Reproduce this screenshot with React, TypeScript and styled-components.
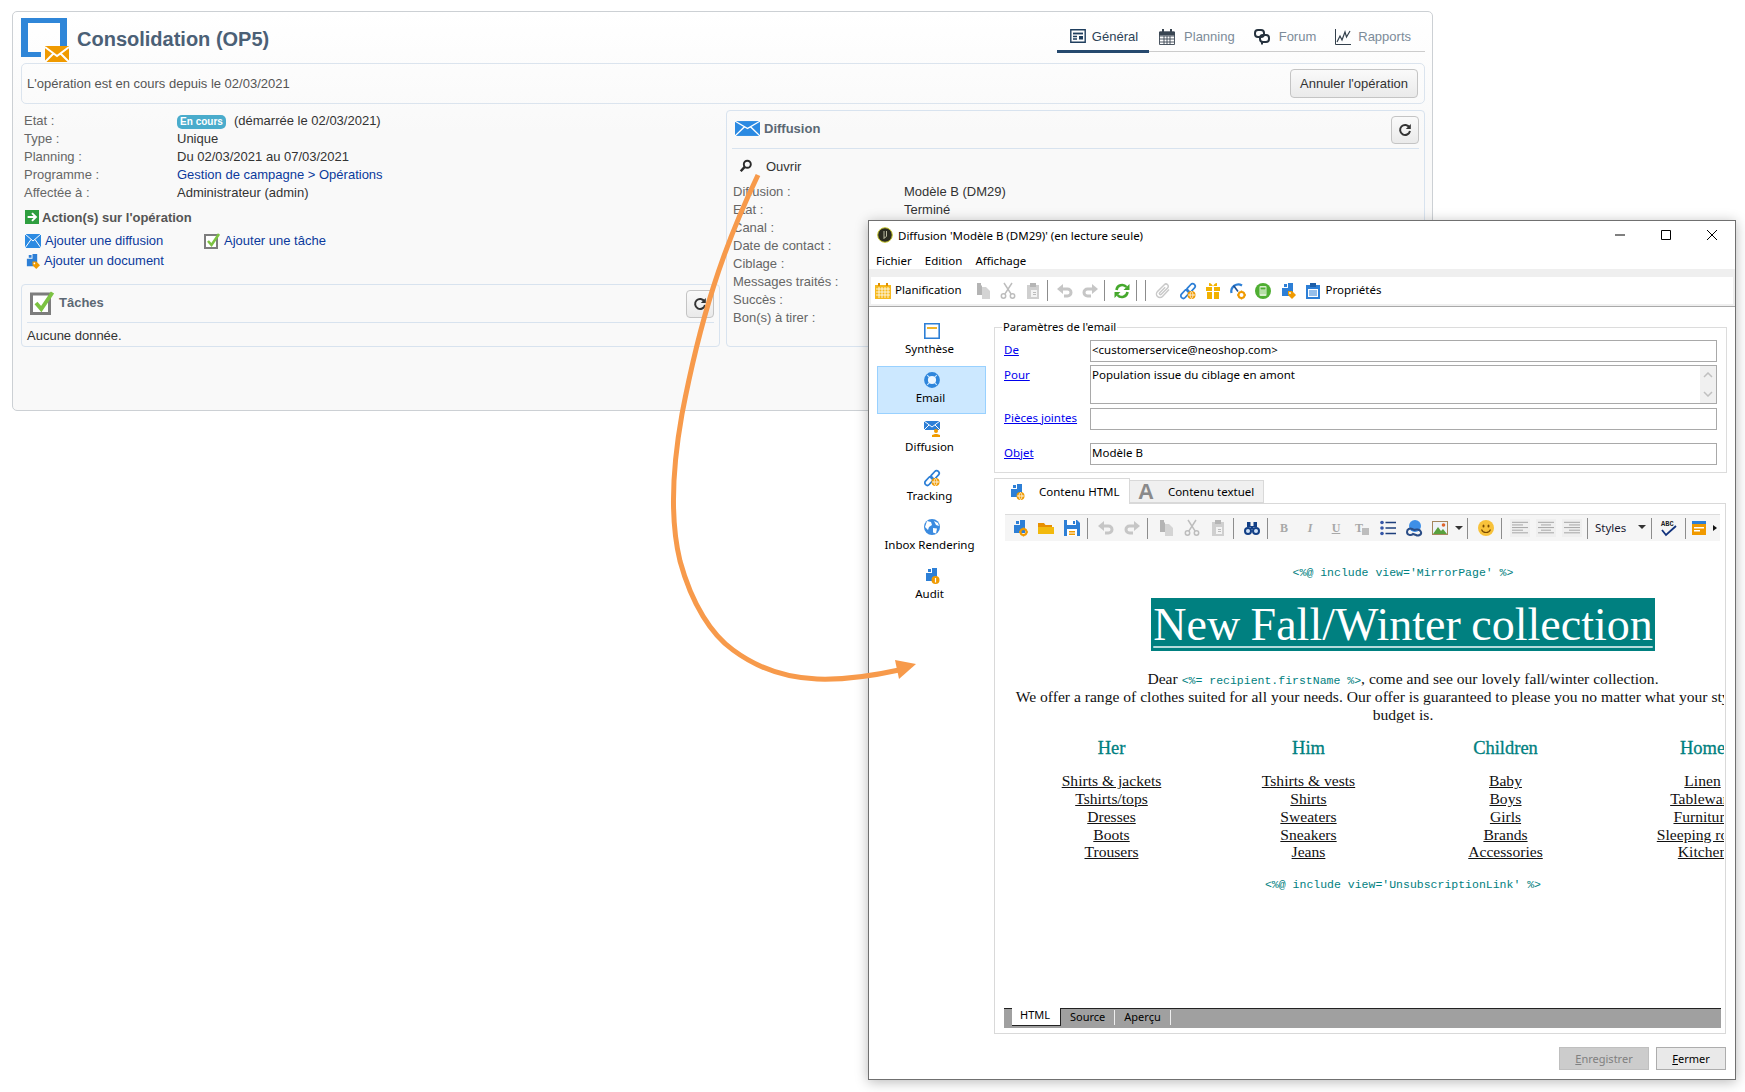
import React from "react";
import styled, { createGlobalStyle } from "styled-components";

const GlobalStyle = createGlobalStyle`
  html, body { margin: 0; padding: 0; background: #fff; }
  body { font-family: "Liberation Sans", Arial, sans-serif; font-size: 13px; color: #333; }
  #root { position: relative; width: 1745px; height: 1092px; overflow: hidden; }
`;

const BLUE = "#2d7fd6";
const ORANGE = "#f09a00";
const GREY = "#c6c6c6";
const UI_FONT = `"Noto Sans", "Liberation Sans", sans-serif`;
const SERIF = `"Liberation Serif", "Times New Roman", serif`;
const MONO = `"Liberation Mono", "Courier New", monospace`;

/* ---------- icons ---------- */
const Doc = ({ c = BLUE }: { c?: string }) => <path d="M4 1h3v3H4zM8 0h5v13H2V5h6z" fill={c} />;
const OrangeGlobe = () => (
  <g>
    <circle cx="11.5" cy="12" r="4" fill={ORANGE} />
    <path d="M8 12h7M11.5 8.5c-2 2-2 5 0 7M11.5 8.5c2 2 2 5 0 7" stroke="#fff" strokeWidth=".8" fill="none" />
  </g>
);
const Gear = () => (
  <g>
    <circle cx="11.5" cy="12" r="3" fill="none" stroke={ORANGE} strokeWidth="2" />
    <path d="M11.5 7.5v2M11.5 14.5v2M7 12h2M14 12h2" stroke={ORANGE} strokeWidth="1.4" />
  </g>
);
const Chain = ({ c = BLUE }: { c?: string }) => (
  <g fill="none" stroke={c} strokeWidth="1.7">
    <rect x="8.5" y="0" width="5" height="10" rx="2.5" transform="rotate(42 11 5)" />
    <rect x="2.5" y="6" width="5" height="10" rx="2.5" transform="rotate(42 5 11)" />
  </g>
);
const Undo = ({ c = GREY }: { c?: string }) => (
  <g>
    <path d="M5 6h5.5a3.5 3.5 0 0 1 0 7H7" fill="none" stroke={c} strokeWidth="3" />
    <path d="M6 1v10L0 6z" fill={c} />
  </g>
);

const ICONS: Record<string, React.ReactNode> = {
  calendar: (
    <g>
      <path d="M0 2h16v14H0z" fill="#f6b91d" />
      <path d="M3 0h2v3H3zM11 0h2v3h-2z" fill="#e08e00" />
      <path d="M1 6h14M1 9h14M1 12h14M4 4v11M7 4v11M10 4v11M13 4v11" stroke="#fff" strokeWidth=".8" />
    </g>
  ),
  copy: (
    <g>
      <path d="M2 0h4v2l1 1v9H2z" fill="#b4b4b4" />
      <path d="M7 4h4l4 4v8H7z" fill="#d4d4d4" />
    </g>
  ),
  cut: (
    <g fill="none" stroke="#bdbdbd" strokeWidth="1.5">
      <circle cx="3.5" cy="13" r="2.2" />
      <circle cx="12.5" cy="13" r="2.2" />
      <path d="M4.8 11.2 12 0M11.2 11.2 4 0" />
    </g>
  ),
  paste: (
    <g>
      <path d="M2 2h12v14H2z" fill="#cfcfcf" />
      <path d="M5 0h6v4H5z" fill="#b5b5b5" />
      <path d="M6 7h6v7H6z" fill="#f3f3f3" />
      <path d="M8 9h3v1H8zM8 11h3v1H8z" fill="#bbb" />
    </g>
  ),
  undo: <Undo />,
  redo: <g transform="translate(16 0) scale(-1 1)"><Undo /></g>,
  refresh: (
    <g>
      <path d="M2.500 7a5.700 5.700 0 0 1 10-3" fill="none" stroke="#45a82c" strokeWidth="2.600" />
      <path d="M15.500 1v6h-6z" fill="#45a82c" />
      <path d="M13.500 9a5.700 5.700 0 0 1-10 3" fill="none" stroke="#45a82c" strokeWidth="2.600" />
      <path d="M.5 15V9h6z" fill="#45a82c" />
    </g>
  ),
  clip: (
    <path
      d="M14 6.500 7.500 13.500a3.500 3.500 0 0 1-5-5l6.800-6.800a2.300 2.300 0 0 1 3.300 3.300l-6.300 6.300a1.100 1.100 0 0 1-1.600-1.600l5.500-5.500"
      fill="none"
      stroke="#c9c9c9"
      strokeWidth="1.500"
    />
  ),
  link: <g><Chain /><OrangeGlobe /></g>,
  gift: (
    <g fill="#f2b200">
      <path d="M1 4h14v4H1zM2 9h12v7H2z" />
      <path d="M4 0c2 0 3 1.500 4 3.500C9 1.500 10 0 12 0v3H4z" />
      <path d="M7 4h2v12H7z" fill="#fff" />
    </g>
  ),
  gauge: (
    <g>
      <path d="M1.500 10A7 7 0 0 1 12 2.500" fill="none" stroke={BLUE} strokeWidth="2.200" />
      <path d="M3.500 2.500l4.500 6" stroke="#1f4f8f" strokeWidth="1.500" />
      <Gear />
    </g>
  ),
  calc: (
    <g>
      <circle cx="8" cy="8" r="8" fill="#4fae32" />
      <rect x="4.500" y="3" width="7" height="10" rx="1" fill="#d9efcf" />
      <path d="M5.500 4.500h5v2h-5z" fill="#4fae32" />
      <path d="M5.500 8h5M5.500 10h5" stroke="#4fae32" strokeDasharray="1 1" />
    </g>
  ),
  docTag: (
    <g>
      <Doc />
      <path d="M8 8h4l4 4-4 4-4-4z" fill={ORANGE} />
      <circle cx="10" cy="10" r=".9" fill="#fff" />
    </g>
  ),
  clipboard: (
    <g>
      <path d="M1 2h14v14H1z" fill={BLUE} />
      <path d="M5 0h6v4H5z" fill="#1f5fa8" />
      <path d="M3 6h10v8H3z" fill="#fff" />
      <path d="M4 8h8M4 10h8M4 12h8" stroke={BLUE} strokeWidth="1" />
    </g>
  ),
  docGlobe: <g><Doc /><OrangeGlobe /></g>,
  docGear: <g><Doc /><Gear /></g>,
  docInfo: (
    <g>
      <Doc />
      <circle cx="11.500" cy="12" r="4" fill={ORANGE} />
      <path d="M11.500 10v4.500" stroke="#fff" strokeWidth="1.200" />
    </g>
  ),
  folder: (
    <g>
      <path d="M0 3h6l1.500 2H14v2H0z" fill="#e88f00" />
      <path d="M0 7h16v7H0z" fill="#f2b90d" />
    </g>
  ),
  save: (
    <g>
      <path d="M0 0h13l3 3v13H0z" fill={BLUE} />
      <path d="M3 0h9v5H3z" fill="#fff" />
      <path d="M9 1h2v3H9z" fill={BLUE} />
      <path d="M3 9h10v7H3z" fill="#fff" />
      <path d="M5 11h6v1.500H5zM5 13.500h6V15H5z" fill={ORANGE} />
    </g>
  ),
  binoculars: (
    <g fill="#123f86">
      <path d="M3 2h3.500v5H3zM9.500 2H13v5H9.500zM6.500 6h3v3h-3z" />
      <circle cx="4" cy="11" r="4" />
      <circle cx="12" cy="11" r="4" />
      <circle cx="4" cy="11" r="2" fill="#cfe2f7" />
      <circle cx="12" cy="11" r="2" fill="#cfe2f7" />
    </g>
  ),
  list: (
    <g>
      <path d="M5.500 2.500H16M5.500 8H16M5.500 13.500H16" stroke="#1d3f7c" strokeWidth="1.500" />
      <circle cx="2" cy="2.500" r="1.800" fill="#3556a8" />
      <circle cx="2" cy="8" r="1.800" fill="#3556a8" />
      <circle cx="2" cy="13.500" r="1.800" fill="#3556a8" />
    </g>
  ),
  webLink: (
    <g>
      <circle cx="9" cy="6" r="6" fill="#3e8fe8" />
      <path d="M1 12c0-3 3-4 5-3l2 1c2-1 6-1 7 2s-3 4-5 3l-3-1c-2 2-6 1-6-2z" fill="none" stroke="#2b4d86" strokeWidth="2" />
    </g>
  ),
  image: (
    <g>
      <path d="M0 1h16v14H0z" fill="#a5865c" />
      <path d="M1 2h14v12H1z" fill="#eef3f7" />
      <circle cx="11.500" cy="5" r="1.800" fill="#e0642a" />
      <path d="M1 14l5-7 3 4 2-2 4 5z" fill="#59a13c" />
    </g>
  ),
  smile: (
    <g>
      <circle cx="8" cy="8" r="8" fill="#f8c23a" />
      <ellipse cx="5.500" cy="6" rx="1" ry="1.600" fill="#7a4a00" />
      <ellipse cx="10.500" cy="6" rx="1" ry="1.600" fill="#7a4a00" />
      <path d="M3.500 9.500c1.500 4 7.500 4 9 0" fill="none" stroke="#7a4a00" strokeWidth="1.100" />
    </g>
  ),
  alignLeft: <path d="M0 1.500h16M0 4.500h11M0 7.500h16M0 10.500h11M0 13.500h16" stroke="#a2a2a2" />,
  alignCenter: <path d="M0 1.500h16M3 4.500h10M0 7.500h16M3 10.500h10M0 13.500h16" stroke="#a2a2a2" />,
  alignRight: <path d="M0 1.500h16M5 4.500h11M0 7.500h16M5 10.500h11M0 13.500h16" stroke="#a2a2a2" />,
  spell: (
    <g>
      <text x="0" y="6" fontFamily="Liberation Mono, monospace" fontSize="7" fontWeight="700" fill="#222">ABC</text>
      <path d="M1 10l4 5L15 6" fill="none" stroke="#11327d" strokeWidth="1.800" />
    </g>
  ),
  orangeWin: (
    <g>
      <path d="M1 1h14v14H1z" fill={ORANGE} />
      <path d="M1 1h14v3H1z" fill={BLUE} />
      <path d="M3 7h10v1.500H3zM3 10h6v1.500H3z" fill="#fff" />
    </g>
  ),
  summary: (
    <g>
      <path d="M.8.800h14.400v14.400H.8z" fill="#fff" stroke={BLUE} strokeWidth="1.600" />
      <path d="M3 4h10v2H3z" fill="#f0b429" />
    </g>
  ),
  lifebuoy: (
    <g>
      <circle cx="8" cy="8" r="4" fill="#eef7ff" />
      <circle cx="8" cy="8" r="6" fill="none" stroke="#2f86dc" strokeWidth="3.800" />
      <path d="M3.200 3.200l2 2M12.800 3.200l-2 2M3.200 12.800l2-2M12.800 12.800l-2-2" stroke="#cce8ff" strokeWidth="1.100" />
    </g>
  ),
  mailPerson: (
    <g>
      <path d="M0 0h16v9H0z" fill={BLUE} />
      <path d="M0 0l8 6 8-6M0 9l5-5M16 9l-5-5" stroke="#fff" fill="none" />
      <circle cx="12" cy="10" r="2" fill={ORANGE} />
      <path d="M8 16v-2l3-1h2l3 1v2z" fill={ORANGE} />
    </g>
  ),
  globe: (
    <g>
      <circle cx="8" cy="8" r="8" fill="#3b8be0" />
      <path d="M3 2l4 1 1 3-3 2-1 3-3-3zM9 9l4 .500-1 5-3-1zM10 2l4 2 1 3-3-1z" fill="#fff" />
    </g>
  ),
  search: (
    <g fill="none" stroke="#2b2b2b">
      <circle cx="9.500" cy="6" r="4" strokeWidth="2.200" />
      <path d="M6.500 9 2 14" strokeWidth="2.800" />
    </g>
  ),
  mail: (
    <g>
      <path d="M0 1h16v14H0z" fill="#2b8ae2" />
      <path d="M0 1l8 7 8-7M0 15l6-8.500M16 15l-6-8.500" stroke="#fff" strokeWidth="1" fill="none" />
    </g>
  ),
  arrowBox: (
    <g>
      <path d="M0 0h16v16H0z" fill="#2e9e3f" />
      <path d="M3 8h8M8 3.500 12.500 8 8 12.500" stroke="#fff" strokeWidth="2.200" fill="none" />
    </g>
  ),
  check: (
    <g>
      <path d="M1 2h12v13H1z" fill="#fff" stroke="#7d7d7d" strokeWidth="2" />
      <path d="M4 8l3.500 4L15 1" fill="none" stroke="#7cc242" strokeWidth="2.600" />
    </g>
  ),
  news: (
    <g fill="none" stroke="#1f3e5e" strokeWidth="1.400">
      <path d="M.8 1.800h14.400v12.400H.8z" />
      <path d="M3 5.500h10" strokeWidth="1.800" />
      <path d="M3 8.500h4M3 11h4" />
      <path d="M9 8h4v3.500H9z" fill="#1f3e5e" stroke="none" />
    </g>
  ),
  grid: (
    <g fill="none" stroke="#3a4652" strokeWidth=".9">
      <path d="M.5 3h15v12.500H.5zM.5 7h15M.5 10h15M.5 13h15M5 7v8.500M8 7v8.500M11 7v8.500" />
      <path d="M4 0v3M12 0v3" strokeWidth="2" />
      <path d="M.5 3h15v3h-15z" fill="#3a4652" />
    </g>
  ),
  forum: (
    <g fill="none" stroke="#26323e" strokeWidth="2">
      <rect x="1" y="1" width="9" height="7" rx="3" />
      <rect x="6" y="6" width="9" height="7" rx="3" />
      <path d="M8 13v2.500" />
    </g>
  ),
  chart: (
    <g fill="none" stroke="#33404c">
      <path d="M.5 0v15.500H16" />
      <path d="M2 13l3-6 2 4 3-8 1.500 5L15 2" strokeWidth="1.200" />
    </g>
  ),
};

const Icon = ({ name, size = 16, h }: { name: string; size?: number; h?: number }) => (
  <svg width={size} height={h ?? size} viewBox="0 0 16 16" preserveAspectRatio="none" overflow="visible" style={{ flex: "none" }}>
    {ICONS[name]}
  </svg>
);

const RefreshGlyph = () => (
  <svg width="14" height="14" viewBox="0 0 14 14">
    <path d="M11.500 4.500A5 5 0 1 0 12 8" fill="none" stroke="#333" strokeWidth="2" />
    <path d="M12.800 1v5h-5z" fill="#333" />
  </svg>
);

/* ---------- operation page ---------- */
const Page = styled.div`
  padding: 11px 0 0 12px;
`;
const Panel = styled.section`
  box-sizing: border-box;
  width: 1421px;
  height: 400px;
  padding: 0 7px 0 8px;
  background: linear-gradient(#fff, #f9f9f9 120px);
  border: 1px solid #ccd0d4;
  border-radius: 5px;
`;
const Header = styled.header`
  display: flex;
  align-items: flex-start;
  height: 51px;
`;
const Logo = styled.svg`
  width: 48px;
  height: 44px;
  margin-top: 6px;
  flex: none;
`;
const Title = styled.h1`
  margin: 13px 0 0 8px;
  font-size: 20px;
  line-height: 28px;
  font-weight: 700;
  color: #4b6076;
`;
const TabList = styled.nav`
  display: flex;
  margin-left: auto;
  height: 39px;
  padding-right: 14px;
  border-bottom: 1px solid #ccc;
`;
const Tab = styled.div<{ $active?: boolean; $tight?: boolean }>`
  display: flex;
  align-items: center;
  gap: ${(p) => (p.$active ? 6 : p.$tight ? 7 : 9)}px;
  box-sizing: border-box;
  padding: ${(p) => (p.$active ? "16px 11px 6px 13px" : "16px 9px 6px 10px")};
  margin-bottom: -1px;
  font-size: 13px;
  color: ${(p) => (p.$active ? "#2c4257" : "#7c8b99")};
  border-bottom: ${(p) => (p.$active ? "3px solid #26496e" : "none")};
  height: ${(p) => (p.$active ? "41px" : "39px")};
  &:last-child { padding-right: 0; }
`;
const StatusBar = styled.div`
  display: flex;
  align-items: center;
  justify-content: space-between;
  box-sizing: border-box;
  height: 41px;
  padding: 0 6px 0 5px;
  border: 1px solid #dbe4ee;
  border-radius: 5px;
  color: #555;
`;
const PlainButton = styled.button`
  height: 29px;
  padding: 0 9px;
  font: 13px "Liberation Sans", Arial, sans-serif;
  color: #333;
  background: linear-gradient(#fafafa, #eaeaea);
  border: 1px solid #c4c4c4;
  border-radius: 4px;
`;
const IconButton = styled(PlainButton)`
  display: flex;
  align-items: center;
  justify-content: center;
  width: 28px;
  height: 28px;
  padding: 0;
`;
const Columns = styled.div`
  display: flex;
  gap: 6px;
  margin-top: 6px;
  height: 237px;
`;
const LeftColumn = styled.div`
  display: flex;
  flex-direction: column;
  flex: 699px 0 0;
  padding-top: 2px;
`;
const InfoRow = styled.div`
  display: flex;
  height: 18px;
  line-height: 18px;
  padding-left: 3px;
`;
const InfoLabel = styled.span<{ $wide?: boolean }>`
  flex: none;
  width: ${(p) => (p.$wide ? "171px" : "153px")};
  color: #666;
`;
const InfoValue = styled.span`
  display: flex;
  align-items: center;
  gap: 8px;
  color: #333;
`;
const Badge = styled.span`
  width: 49px;
  height: 14px;
  line-height: 14px;
  margin-top: 1px;
  text-align: center;
  font-size: 10px;
  font-weight: 700;
  color: #fff;
  background: #4aaccc;
  border-radius: 5px;
`;
const BlueLink = styled.a`
  color: #0b3a9c;
`;
const ActionTitle = styled.div`
  display: flex;
  align-items: center;
  gap: 3px;
  margin-top: 6px;
  padding-left: 4px;
  height: 18px;
  font-weight: 700;
  color: #555;
`;
const ActionGrid = styled.div`
  display: grid;
  grid-template-columns: 179px auto;
  justify-content: start;
  grid-auto-rows: 20px;
  margin-top: 5px;
  padding-left: 4px;
`;
const ActionLink = styled(BlueLink)`
  display: flex;
  align-items: center;
  gap: 4px;
  line-height: 20px;
`;
const Box = styled.div<{ $fill?: boolean }>`
  box-sizing: border-box;
  padding: 0 5px;
  border: 1px solid #d8e3ef;
  border-radius: 4px;
  ${(p) => (p.$fill ? "flex: 1;" : "margin-top: auto;height: 63px;")}
`;
const BoxHead = styled.div`
  display: flex;
  align-items: center;
  justify-content: space-between;
  height: 37px;
  border-bottom: 1px solid #d8e3ef;
`;
const BoxTitle = styled.div<{ $wide?: boolean }>`
  display: flex;
  align-items: center;
  gap: ${(p) => (p.$wide ? 5 : 4)}px;
  padding: 0 0 2px 3px;
  font-size: 13px;
  font-weight: 700;
  color: #5b6874;
`;
const EmptyText = styled.div`
  line-height: 26px;
  color: #333;
`;
const OpenRow = styled.div`
  box-sizing: border-box;
  display: flex;
  align-items: center;
  gap: 13px;
  height: 34px;
  padding: 0 0 0 7px;
  color: #333;
`;
const DetailRow = styled(InfoRow)`
  padding-left: 1px;
`;

/* ---------- delivery window ---------- */
const Window = styled.div`
  position: absolute;
  left: 868px;
  top: 220px;
  z-index: 2;
  box-sizing: border-box;
  display: flex;
  flex-direction: column;
  width: 868px;
  height: 860px;
  background: #fff;
  border: 1px solid #707070;
  box-shadow: 0 2px 12px rgba(0, 0, 0, 0.28);
  font-family: ${UI_FONT};
  font-size: 11.500px;
  color: #000;
`;
const TitleBar = styled.div`
  box-sizing: border-box;
  display: flex;
  align-items: center;
  height: 30px;
  padding: 0 0 2px 8px;
  gap: 5px;
`;
const WinControls = styled.div`
  display: flex;
  margin-left: auto;
`;
const WinControl = styled.div`
  display: flex;
  align-items: center;
  justify-content: center;
  width: 46px;
  height: 28px;
`;
const MenuBar = styled.div`
  display: flex;
  align-items: center;
  gap: 13px;
  height: 18px;
  padding-left: 7px;
`;
const ToolbarBand = styled.div`
  padding: 8px 2px 2px 2px;
  background: #efefef;
  border-bottom: 1px solid #a9a9a9;
`;
const Toolbar = styled.div`
  display: flex;
  align-items: center;
  height: 27px;
  padding-left: 4px;
  background: #fff;
`;
const ToolLabel = styled.span<{ $lead?: number; $trail?: number }>`
  margin: 0 ${(p) => p.$trail ?? 0}px 2px ${(p) => p.$lead ?? 0}px;
`;
const ToolSlot = styled.span<{ $w?: number }>`
  display: flex;
  align-items: center;
  justify-content: center;
  flex: none;
  width: ${(p) => p.$w ?? 25}px;
  height: 100%;
`;
const Sep = styled.span<{ $before?: number; $after?: number }>`
  flex: none;
  width: 1px;
  height: 21px;
  margin: 0 ${(p) => p.$after ?? 5}px 0 ${(p) => p.$before ?? 1}px;
  background: #8c8c8c;
`;
const WindowBody = styled.div`
  display: flex;
  flex: 1;
  min-height: 0;
`;
const SideNav = styled.nav`
  display: flex;
  flex-direction: column;
  gap: 1px;
  flex: none;
  box-sizing: border-box;
  width: 125px;
  padding: 10px 8px 0 8px;
`;
const SideItem = styled.div<{ $active?: boolean }>`
  box-sizing: border-box;
  display: flex;
  flex-direction: column;
  align-items: center;
  height: 48px;
  padding-top: 5px;
  line-height: 18px;
  background: ${(p) => (p.$active ? "#cce8ff" : "transparent")};
  border: 1px solid ${(p) => (p.$active ? "#99d1ff" : "transparent")};
`;
const SideLabel = styled.span<{ $active?: boolean }>`
  margin-right: ${(p) => (p.$active ? 2 : 4)}px;
  margin-top: 1px;
  white-space: nowrap;
`;
const MainColumn = styled.div`
  display: flex;
  flex-direction: column;
  width: 733px;
  padding-top: 13px;
`;
const Params = styled.fieldset`
  margin: 0;
  padding: 6px 9px 7px 9px;
  min-width: 0;
  border: 1px solid #dcdcdc;
  display: flex;
  flex-direction: column;
`;
const ParamsLegend = styled.legend`
  padding: 0 1px;
  margin-left: -2px;
  line-height: 14px;
  font-size: 11.200px;
`;
const FieldRow = styled.div<{ $gap?: number }>`
  display: flex;
  margin-top: ${(p) => p.$gap ?? 0}px;
`;
const FieldLink = styled.a`
  flex: none;
  width: 86px;
  line-height: 20px;
  color: #0000ee;
  text-decoration: underline;
`;
const FieldBox = styled.div<{ $h?: number }>`
  box-sizing: border-box;
  display: flex;
  justify-content: space-between;
  width: 627px;
  height: ${(p) => p.$h ?? 22}px;
  padding-left: 1px;
  line-height: 18px;
  border: 1px solid #a9a9a9;
`;
const ScrollTrack = styled.div`
  display: flex;
  flex-direction: column;
  justify-content: space-between;
  align-items: center;
  width: 16px;
  padding: 6px 0;
  background: #f0f0f0;
`;
const TabStrip = styled.div`
  display: flex;
  align-items: flex-end;
  height: 25px;
  margin-top: 5px;
`;
const ContentTab = styled.div<{ $active?: boolean }>`
  box-sizing: border-box;
  display: flex;
  align-items: center;
  gap: 14px;
  width: ${(p) => (p.$active ? "136px" : "134px")};
  height: ${(p) => (p.$active ? "26px" : "23px")};
  margin-bottom: ${(p) => (p.$active ? "-1px" : "0")};
  padding-left: ${(p) => (p.$active ? "14px" : "8px")};
  background: ${(p) => (p.$active ? "#fff" : "#f0f0f0")};
  border: 1px solid #d9d9d9;
  border-bottom: ${(p) => (p.$active ? "none" : "1px solid #d9d9d9")};
  border-left: ${(p) => (p.$active ? "1px solid #d9d9d9" : "none")};
  position: relative;
`;
const LetterA = styled.span`
  font: 700 22px "Liberation Sans", sans-serif;
  color: #8a8a8a;
`;
const Pane = styled.div`
  box-sizing: border-box;
  display: flex;
  flex-direction: column;
  width: 732px;
  height: 531px;
  padding: 10px 5px 5px 10px;
  border: 1px solid #d9d9d9;
`;
const EditorBar = styled.div`
  display: flex;
  align-items: center;
  box-sizing: border-box;
  flex: none;
  width: 715px;
  height: 27px;
  padding-left: 2px;
  background: #f5f5f5;
  border-top: 1px solid #dcdcdc;
`;
const FormatLetter = styled.span<{ $italic?: boolean; $under?: boolean }>`
  font: ${(p) => (p.$italic ? "italic" : "normal")} 700 12px ${SERIF};
  color: #a8a8a8;
  text-decoration: ${(p) => (p.$under ? "underline" : "none")};
`;
const ClearFormat = styled(FormatLetter)`
  position: relative;
  margin-right: 6px;
  &::after {
    content: "";
    position: absolute;
    left: 7px;
    top: 7px;
    width: 7px;
    height: 7px;
    background: #bdbdbd;
  }
`;
const AlignSlot = styled(ToolSlot)`
  & > svg { background: #efefef; box-shadow: 0 0 0 2px #efefef; }
`;
const StylesSelect = styled.span`
  display: flex;
  align-items: center;
  justify-content: space-between;
  box-sizing: border-box;
  width: 52px;
  margin: 0 4px 2px 7px;
  padding-right: 1px;
  color: #1a1a33;
`;
const Caret = styled.span`
  width: 0;
  height: 0;
  border-left: 4px solid transparent;
  border-right: 4px solid transparent;
  border-top: 4px solid #333;
`;
const CaretRight = styled.span`
  margin-left: 1px;
  width: 0;
  height: 0;
  border-top: 3.500px solid transparent;
  border-bottom: 3.500px solid transparent;
  border-left: 4px solid #111;
`;
const Mail = styled.div`
  flex: 1;
  width: 719px;
  overflow: hidden;
`;
const MailInner = styled.div`
  display: flex;
  flex-direction: column;
  align-items: center;
  width: 796px;
  padding-top: 25px;
  font: 15.600px/17.700px ${SERIF};
  color: #111;
`;
const Code = styled.span`
  font: 11.500px/14px ${MONO};
  color: #008080;
`;
const Banner = styled.div`
  width: 504px;
  height: 53px;
  margin: 18px 0 19px;
  text-align: center;
  font: 46px/53px ${SERIF};
  word-spacing: -1px;
  color: #fff;
  background: #008080;
  text-decoration: underline;
  text-decoration-color: #b5dcdc;
  text-decoration-thickness: 2px;
  text-underline-offset: 6px;
  white-space: nowrap;
`;
const Intro = styled.p`
  width: 796px;
  margin: 0;
  text-align: center;
  white-space: normal;
`;
const Categories = styled.div`
  display: grid;
  grid-template-columns: repeat(4, 197px);
  width: 788px;
  margin: 14px 0 0 8px;
  align-self: flex-start;
`;
const Category = styled.div`
  display: flex;
  flex-direction: column;
  align-items: center;
`;
const CategoryTitle = styled.div`
  font-size: 18.500px;
  line-height: 22px;
  margin-bottom: 13px;
  color: #008080;
  -webkit-text-stroke: 0.3px #008080;
`;
const CategoryLink = styled.a`
  color: #111;
  text-decoration: underline;
  white-space: nowrap;
`;
const Footnote = styled.div`
  margin-top: 13px;
`;
const ModeBar = styled.div`
  display: flex;
  flex: none;
  box-sizing: border-box;
  width: 717px;
  height: 20px;
  margin-left: -1px;
  padding-left: 8px;
  background: #a0a0a0;
  border-top: 1px solid #222;
  font-size: 11px;
`;
const ModeTab = styled.div<{ $active?: boolean }>`
  box-sizing: border-box;
  height: ${(p) => (p.$active ? "18px" : "15px")};
  line-height: 14px;
  padding: 0 9px;
  margin-top: ${(p) => (p.$active ? "-1px" : "1px")};
  background: ${(p) => (p.$active ? "#fff" : "transparent")};
  border-bottom: ${(p) => (p.$active ? "1px solid #222" : "none")};
  border-right: 1px solid ${(p) => (p.$active ? "#222" : "#eee")};
  padding-left: ${(p) => (p.$active ? "8px" : "9px")};
  width: ${(p) => (p.$active ? "49px" : "auto")};
`;
const WindowFooter = styled.div`
  display: flex;
  justify-content: flex-end;
  gap: 7px;
  margin-top: 13px;
  padding-right: 1px;
`;
const DialogButton = styled.button<{ $disabled?: boolean }>`
  box-sizing: border-box;
  width: ${(p) => (p.$disabled ? "90px" : "70px")};
  height: 23px;
  padding: 0;
  font: 11px ${UI_FONT};
  color: ${(p) => (p.$disabled ? "#808080" : "#000")};
  background: ${(p) => (p.$disabled ? "#cccccc" : "#e9e9e9")};
  border: 1px solid ${(p) => (p.$disabled ? "#bfbfbf" : "#adadad")};
`;
const ArrowLayer = styled.svg`
  position: absolute;
  left: 0;
  top: 0;
  z-index: 3;
  pointer-events: none;
`;

const COLUMNS = [
  { title: "Her", links: ["Shirts & jackets", "Tshirts/tops", "Dresses", "Boots", "Trousers"] },
  { title: "Him", links: ["Tshirts & vests", "Shirts", "Sweaters", "Sneakers", "Jeans"] },
  { title: "Children", links: ["Baby", "Boys", "Girls", "Brands", "Accessories"] },
  { title: "Home", links: ["Linen", "Tableware", "Furniture", "Sleeping room", "Kitchen"] },
];

const SIDE = [
  { icon: "summary", label: "Synthèse" },
  { icon: "lifebuoy", label: "Email", active: true },
  { icon: "mailPerson", label: "Diffusion" },
  { icon: "link", label: "Tracking" },
  { icon: "globe", label: "Inbox Rendering" },
  { icon: "docInfo", label: "Audit" },
];

const Tool = ({ name, w }: { name: string; w?: number }) => (
  <ToolSlot $w={w}>
    <Icon name={name} />
  </ToolSlot>
);

function OperationPage() {
  return (
    <Page>
      <Panel>
        <Header>
          <Logo viewBox="0 0 48 44">
            <path d="M0 0h46v28h-7V5H7v29h13v5H0z" fill="#2f86d8" />
            <path d="M24 28h24v16H24z" fill={ORANGE} />
            <path d="M24 29l12 9 12-9M24 44l9-9M48 44l-9-9" stroke="#fff" strokeWidth="2" fill="none" />
          </Logo>
          <Title>Consolidation (OP5)</Title>
          <TabList>
            <Tab $active><Icon name="news" />Général</Tab>
            <Tab><Icon name="grid" />Planning</Tab>
            <Tab><Icon name="forum" />Forum</Tab>
            <Tab $tight><Icon name="chart" />Rapports</Tab>
          </TabList>
        </Header>
        <StatusBar>
          L'opération est en cours depuis le 02/03/2021
          <PlainButton>Annuler l'opération</PlainButton>
        </StatusBar>
        <Columns>
          <LeftColumn>
            <InfoRow><InfoLabel>Etat :</InfoLabel><InfoValue><Badge>En cours</Badge>(démarrée le 02/03/2021)</InfoValue></InfoRow>
            <InfoRow><InfoLabel>Type :</InfoLabel><InfoValue>Unique</InfoValue></InfoRow>
            <InfoRow><InfoLabel>Planning :</InfoLabel><InfoValue>Du 02/03/2021 au 07/03/2021</InfoValue></InfoRow>
            <InfoRow><InfoLabel>Programme :</InfoLabel><InfoValue><BlueLink>Gestion de campagne &gt; Opérations</BlueLink></InfoValue></InfoRow>
            <InfoRow><InfoLabel>Affectée à :</InfoLabel><InfoValue>Administrateur (admin)</InfoValue></InfoRow>
            <ActionTitle><Icon name="arrowBox" size={14} />Action(s) sur l'opération</ActionTitle>
            <ActionGrid>
              <ActionLink><Icon name="mail" />Ajouter une diffusion</ActionLink>
              <ActionLink><Icon name="check" />Ajouter une tâche</ActionLink>
              <ActionLink><Icon name="docTag" size={15} />Ajouter un document</ActionLink>
            </ActionGrid>
            <Box>
              <BoxHead>
                <BoxTitle $wide><Icon name="check" size={24} />Tâches</BoxTitle>
                <IconButton><RefreshGlyph /></IconButton>
              </BoxHead>
              <EmptyText>Aucune donnée.</EmptyText>
            </Box>
          </LeftColumn>
          <Box $fill>
            <BoxHead>
              <BoxTitle><Icon name="mail" size={25} h={17} />Diffusion</BoxTitle>
              <IconButton><RefreshGlyph /></IconButton>
            </BoxHead>
            <OpenRow><Icon name="search" size={14} />Ouvrir</OpenRow>
            <DetailRow><InfoLabel $wide>Diffusion :</InfoLabel><InfoValue>Modèle B (DM29)</InfoValue></DetailRow>
            <DetailRow><InfoLabel $wide>Etat :</InfoLabel><InfoValue>Terminé</InfoValue></DetailRow>
            <DetailRow><InfoLabel $wide>Canal :</InfoLabel></DetailRow>
            <DetailRow><InfoLabel $wide>Date de contact :</InfoLabel></DetailRow>
            <DetailRow><InfoLabel $wide>Ciblage :</InfoLabel></DetailRow>
            <DetailRow><InfoLabel $wide>Messages traités :</InfoLabel></DetailRow>
            <DetailRow><InfoLabel $wide>Succès :</InfoLabel></DetailRow>
            <DetailRow><InfoLabel $wide>Bon(s) à tirer :</InfoLabel></DetailRow>
          </Box>
        </Columns>
      </Panel>
    </Page>
  );
}

function DeliveryWindow() {
  return (
    <Window>
      <TitleBar>
        <svg width="16" height="16" viewBox="0 0 16 16">
          <circle cx="8" cy="8" r="7.300" fill="#2b2b22" stroke="#c9c92e" />
          <path d="M7 4v8M9.500 4v5a1.500 1.500 0 0 1-2.500 1" fill="none" stroke="#b9b9a0" />
        </svg>
        Diffusion 'Modèle B (DM29)' (en lecture seule)
        <WinControls>
          <WinControl>
            <svg width="10" height="10" viewBox="0 0 10 10"><path d="M0 5h10" stroke="#000" /></svg>
          </WinControl>
          <WinControl>
            <svg width="10" height="10" viewBox="0 0 10 10"><path d="M.5.500h9v9h-9z" fill="none" stroke="#000" /></svg>
          </WinControl>
          <WinControl>
            <svg width="10" height="10" viewBox="0 0 10 10"><path d="M0 0l10 10M10 0 0 10" stroke="#000" /></svg>
          </WinControl>
        </WinControls>
      </TitleBar>
      <MenuBar>
        <span>Fichier</span>
        <span>Edition</span>
        <span>Affichage</span>
      </MenuBar>
      <ToolbarBand>
        <Toolbar>
          <Icon name="calendar" />
          <ToolLabel $lead={4} $trail={9}>Planification</ToolLabel>
          <Tool name="copy" /><Tool name="cut" /><Tool name="paste" />
          <Sep />
          <Tool name="undo" /><Tool name="redo" />
          <Sep />
          <Tool name="refresh" />
          <Sep $after={7} />
          <Sep />
          <Tool name="clip" /><Tool name="link" /><Tool name="gift" /><Tool name="gauge" />
          <Tool name="calc" /><Tool name="docTag" /><Tool name="clipboard" />
          <ToolLabel>Propriétés</ToolLabel>
        </Toolbar>
      </ToolbarBand>
      <WindowBody>
        <SideNav>
          {SIDE.map((item) => (
            <SideItem key={item.label} $active={item.active}>
              <Icon name={item.icon} />
              <SideLabel $active={item.active}>{item.label}</SideLabel>
            </SideItem>
          ))}
        </SideNav>
        <MainColumn>
          <Params>
            <ParamsLegend>Paramètres de l'email</ParamsLegend>
            <FieldRow>
              <FieldLink>De</FieldLink>
              <FieldBox>&lt;customerservice@neoshop.com&gt;</FieldBox>
            </FieldRow>
            <FieldRow $gap={3}>
              <FieldLink>Pour</FieldLink>
              <FieldBox $h={39}>
                Population issue du ciblage en amont
                <ScrollTrack>
                  <svg width="10" height="6" viewBox="0 0 10 6"><path d="M1 5l4-4 4 4" fill="none" stroke="#c0c0c0" strokeWidth="1.500" /></svg>
                  <svg width="10" height="6" viewBox="0 0 10 6"><path d="M1 1l4 4 4-4" fill="none" stroke="#c0c0c0" strokeWidth="1.500" /></svg>
                </ScrollTrack>
              </FieldBox>
            </FieldRow>
            <FieldRow $gap={4}>
              <FieldLink>Pièces jointes</FieldLink>
              <FieldBox />
            </FieldRow>
            <FieldRow $gap={13}>
              <FieldLink>Objet</FieldLink>
              <FieldBox>Modèle B</FieldBox>
            </FieldRow>
          </Params>
          <TabStrip>
            <ContentTab $active><Icon name="docGlobe" />Contenu HTML</ContentTab>
            <ContentTab><LetterA>A</LetterA>Contenu textuel</ContentTab>
          </TabStrip>
          <Pane>
            <EditorBar>
              <Tool name="docGear" w={26} /><Tool name="folder" w={26} /><Tool name="save" w={26} />
              <Sep $before={2} />
              <Tool name="undo" w={26} /><Tool name="redo" w={26} />
              <Sep $before={2} />
              <Tool name="copy" w={26} /><Tool name="cut" w={26} /><Tool name="paste" w={26} />
              <Sep $before={2} />
              <Tool name="binoculars" w={26} />
              <Sep $before={2} $after={3} />
              <ToolSlot $w={26}><FormatLetter>B</FormatLetter></ToolSlot>
              <ToolSlot $w={26}><FormatLetter $italic>I</FormatLetter></ToolSlot>
              <ToolSlot $w={26}><FormatLetter $under>U</FormatLetter></ToolSlot>
              <ToolSlot $w={26}><ClearFormat>T</ClearFormat></ToolSlot>
              <Tool name="list" w={26} /><Tool name="webLink" w={26} /><Tool name="image" w={26} />
              <ToolSlot $w={12}><Caret /></ToolSlot>
              <Sep $before={2} />
              <Tool name="smile" w={26} />
              <Sep $before={2} />
              <AlignSlot $w={26}><Icon name="alignLeft" h={14} /></AlignSlot>
              <AlignSlot $w={26}><Icon name="alignCenter" h={14} /></AlignSlot>
              <AlignSlot $w={26}><Icon name="alignRight" h={14} /></AlignSlot>
              <Sep $before={2} $after={0} />
              <StylesSelect>Styles<Caret /></StylesSelect>
              <Sep $before={0} $after={4} />
              <Tool name="spell" w={26} />
              <Sep $before={3} $after={0} />
              <Tool name="orangeWin" w={26} />
              <CaretRight />
            </EditorBar>
            <Mail>
              <MailInner>
                <Code>&lt;%@ include view='MirrorPage' %&gt;</Code>
                <Banner>New Fall/Winter collection</Banner>
                <Intro>
                  Dear <Code>&lt;%= recipient.firstName %&gt;</Code>, come and see our lovely fall/winter collection.
                  <br />
                  We offer a range of clothes suited for all your needs. Our offer is guaranteed to please you no matter what your style or your
                  <br />
                  budget is.
                </Intro>
                <Categories>
                  {COLUMNS.map((col) => (
                    <Category key={col.title}>
                      <CategoryTitle>{col.title}</CategoryTitle>
                      {col.links.map((link) => (
                        <CategoryLink key={link}>{link}</CategoryLink>
                      ))}
                    </Category>
                  ))}
                </Categories>
                <Footnote><Code>&lt;%@ include view='UnsubscriptionLink' %&gt;</Code></Footnote>
              </MailInner>
            </Mail>
            <ModeBar>
              <ModeTab $active>HTML</ModeTab>
              <ModeTab>Source</ModeTab>
              <ModeTab>Aperçu</ModeTab>
            </ModeBar>
          </Pane>
          <WindowFooter>
            <DialogButton $disabled><u>E</u>nregistrer</DialogButton>
            <DialogButton><u>F</u>ermer</DialogButton>
          </WindowFooter>
        </MainColumn>
      </WindowBody>
    </Window>
  );
}

export default function App() {
  return (
    <>
      <GlobalStyle />
      <OperationPage />
      <DeliveryWindow />
      <ArrowLayer width="1745" height="1092" viewBox="0 0 1745 1092">
        <path
          d="M758 175C722 250 700 320 682 414C672 470 670 520 680 561C692 605 712 635 733 650C760 670 790 678 817 679C845 680 872 676 899 670"
          fill="none"
          stroke="#f79a4b"
          strokeWidth="5"
        />
        <path d="M916 664 895 660 899 679z" fill="#f79a4b" />
      </ArrowLayer>
    </>
  );
}
